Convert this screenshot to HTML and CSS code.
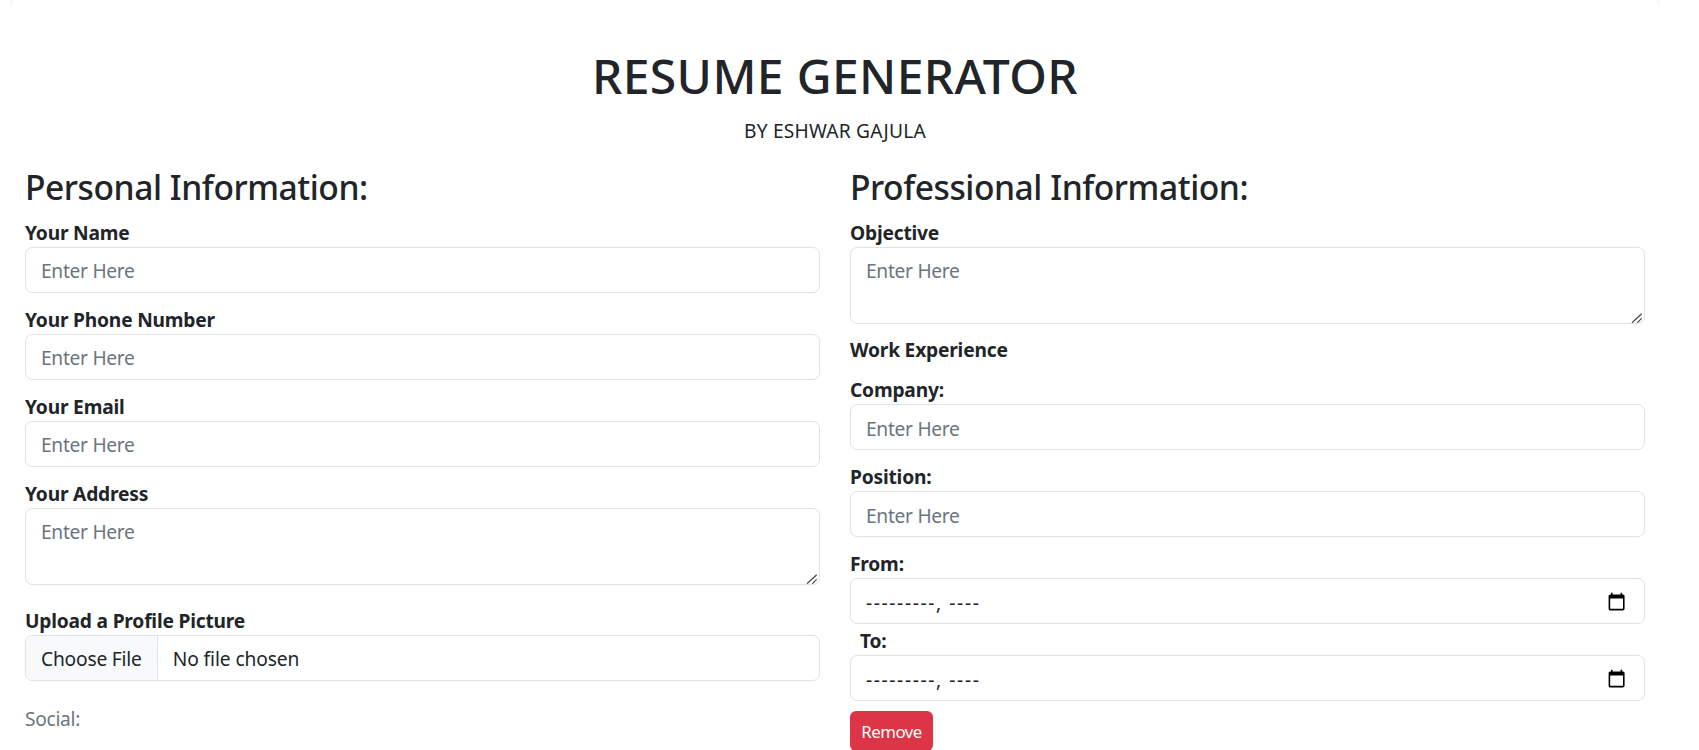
FILE: index.html
```html
<!DOCTYPE html>
<html lang="en">
<head>
    <meta charset="UTF-8">
    <meta name="viewport" content="width=device-width, initial-scale=1.0">
    <title>Resume Generator</title>
    <link rel="stylesheet" href="styles.css">
</head>
<body>
    <div class="container">
        <h1>RESUME GENERATOR</h1>
        <p class="byline">BY ESHWAR GAJULA</p>
        <form action="#" class="columns">
            <div class="column">
                <h3>Personal Information:</h3>
                <div class="field">
                    <label for="name">Your Name</label>
                    <input type="text" id="name" class="control" placeholder="Enter Here">
                </div>
                <div class="field">
                    <label for="phone">Your Phone Number</label>
                    <input type="text" id="phone" class="control" placeholder="Enter Here">
                </div>
                <div class="field">
                    <label for="email">Your Email</label>
                    <input type="text" id="email" class="control" placeholder="Enter Here">
                </div>
                <div class="field field-area">
                    <label for="address">Your Address</label>
                    <textarea id="address" class="control" placeholder="Enter Here"></textarea>
                </div>
                <div class="field field-file">
                    <label for="photo">Upload a Profile Picture</label>
                    <input type="file" id="photo" class="control">
                </div>
                <p class="muted">Social:</p>
            </div>
            <div class="column">
                <h3>Professional Information:</h3>
                <div class="field field-objective">
                    <label for="objective">Objective</label>
                    <textarea id="objective" class="control" placeholder="Enter Here"></textarea>
                </div>
                <div class="field field-title">
                    <label>Work Experience</label>
                </div>
                <div class="field">
                    <label for="company">Company:</label>
                    <input type="text" id="company" class="control" placeholder="Enter Here">
                </div>
                <div class="field">
                    <label for="position">Position:</label>
                    <input type="text" id="position" class="control" placeholder="Enter Here">
                </div>
                <div class="field field-tight">
                    <label>From:</label>
                    <div class="control month">
                        <span>---------, ----</span>
                        <svg viewBox="0 0 24 24" width="19.2" height="19.2"><path d="M20 3h-1V1h-2v2H7V1H5v2H4c-1.1 0-2 .9-2 2v16c0 1.1.9 2 2 2h16c1.1 0 2-.9 2-2V5c0-1.1-.9-2-2-2zm0 18H4V8h16v13z"/></svg>
                    </div>
                </div>
                <div class="field field-to">
                    <label>To:</label>
                    <div class="control month">
                        <span>---------, ----</span>
                        <svg viewBox="0 0 24 24" width="19.2" height="19.2"><path d="M20 3h-1V1h-2v2H7V1H5v2H4c-1.1 0-2 .9-2 2v16c0 1.1.9 2 2 2h16c1.1 0 2-.9 2-2V5c0-1.1-.9-2-2-2zm0 18H4V8h16v13z"/></svg>
                    </div>
                </div>
                <button type="button" class="remove">Remove</button>
            </div>
        </form>
    </div>
</body>
</html>
```

FILE: styles.css
```css
* {
    box-sizing: border-box;
}
html {
    height: 750px;
    overflow: hidden;
    background-color: #fff;
}
body {
    margin: 0 39px 0 10px;
    color: #212529;
    font-family: "Noto Sans", "Open Sans", sans-serif;
    font-size: 19.2px;
    line-height: 1.5;
}
.container {
    min-height: 900px;
    margin-top: -8px;
    padding: 55px 15px 0;
    border-radius: 20px;
    background-color: #fff;
    box-shadow: 0 0 40px rgba(0, 0, 0, 0.1);
}
h1 {
    margin: 0 0 12px;
    font-size: 48px;
    font-weight: 500;
    line-height: 1.2;
    text-align: center;
    letter-spacing: 0.35px;
}
.byline {
    margin: 0 0 22px;
    text-align: center;
    letter-spacing: 0.2px;
}
.columns {
    display: grid;
    grid-template-columns: 1fr 1fr;
    column-gap: 30px;
}
h3 {
    margin: 0 0 11px;
    font-size: 33.6px;
    font-weight: 500;
    line-height: 1.2;
    letter-spacing: -0.45px;
}
.field {
    margin-bottom: 12.6px;
}
.field label {
    display: block;
    font-weight: 700;
    line-height: 28px;
    letter-spacing: -0.2px;
}
.field-area {
    margin-bottom: 22px;
}
.field-objective {
    margin-bottom: 12px;
}
.field-title {
    margin-bottom: 12.4px;
}
.field-tight {
    margin-bottom: 2.6px;
}
.field-to {
    margin-bottom: 10px;
}
.field-to label {
    padding-left: 10px;
}
.control {
    display: block;
    width: 100%;
    height: 46.4px;
    padding: 8px 15px 6px;
    border: 1px solid #dee2e6;
    border-radius: 7.2px;
    background-color: #fff;
    color: #212529;
    font-family: inherit;
    font-size: 19.2px;
    line-height: 1.5;
    letter-spacing: -0.3px;
}
.control::placeholder {
    color: #6c757d;
    opacity: 1;
}
textarea.control {
    height: 77px;
    padding-top: 9px;
    resize: vertical;
}
textarea.control::-webkit-resizer {
    background: url("data:image/svg+xml,%3Csvg xmlns='http://www.w3.org/2000/svg' width='15' height='15'%3E%3Cpath d='M3 14.7 12.7 5.7M8.3 14.7 12.7 10.3' stroke='%23444' stroke-width='1.2' fill='none'/%3E%3C/svg%3E") no-repeat;
}
input[type="file"].control {
    padding: 0;
    line-height: 46px;
    letter-spacing: -0.1px;
}
input[type="file"].control::file-selector-button {
    height: 44.4px;
    margin: 0 15px 0 0;
    padding: 0 15px;
    border: 0;
    border-right: 1px solid #dee2e6;
    border-radius: 0;
    background-color: #f8f9fa;
    color: #212529;
    font-family: inherit;
    font-size: 19.2px;
    letter-spacing: -0.2px;
}
.month {
    display: flex;
    justify-content: space-between;
    align-items: center;
    padding: 0 18px 0 15px;
    letter-spacing: 1.6px;
}
.month span {
    padding-top: 4px;
}
.month svg {
    display: block;
    fill: #000;
}
.muted {
    margin: 24px 0 0;
    color: #6c757d;
    letter-spacing: -0.3px;
}
.remove {
    display: block;
    width: 83px;
    height: 40px;
    padding: 0;
    border: none;
    border-radius: 6px;
    background-color: #dc3545;
    color: #fff;
    font-family: inherit;
    font-size: 16.8px;
    letter-spacing: -0.5px;
}
```
